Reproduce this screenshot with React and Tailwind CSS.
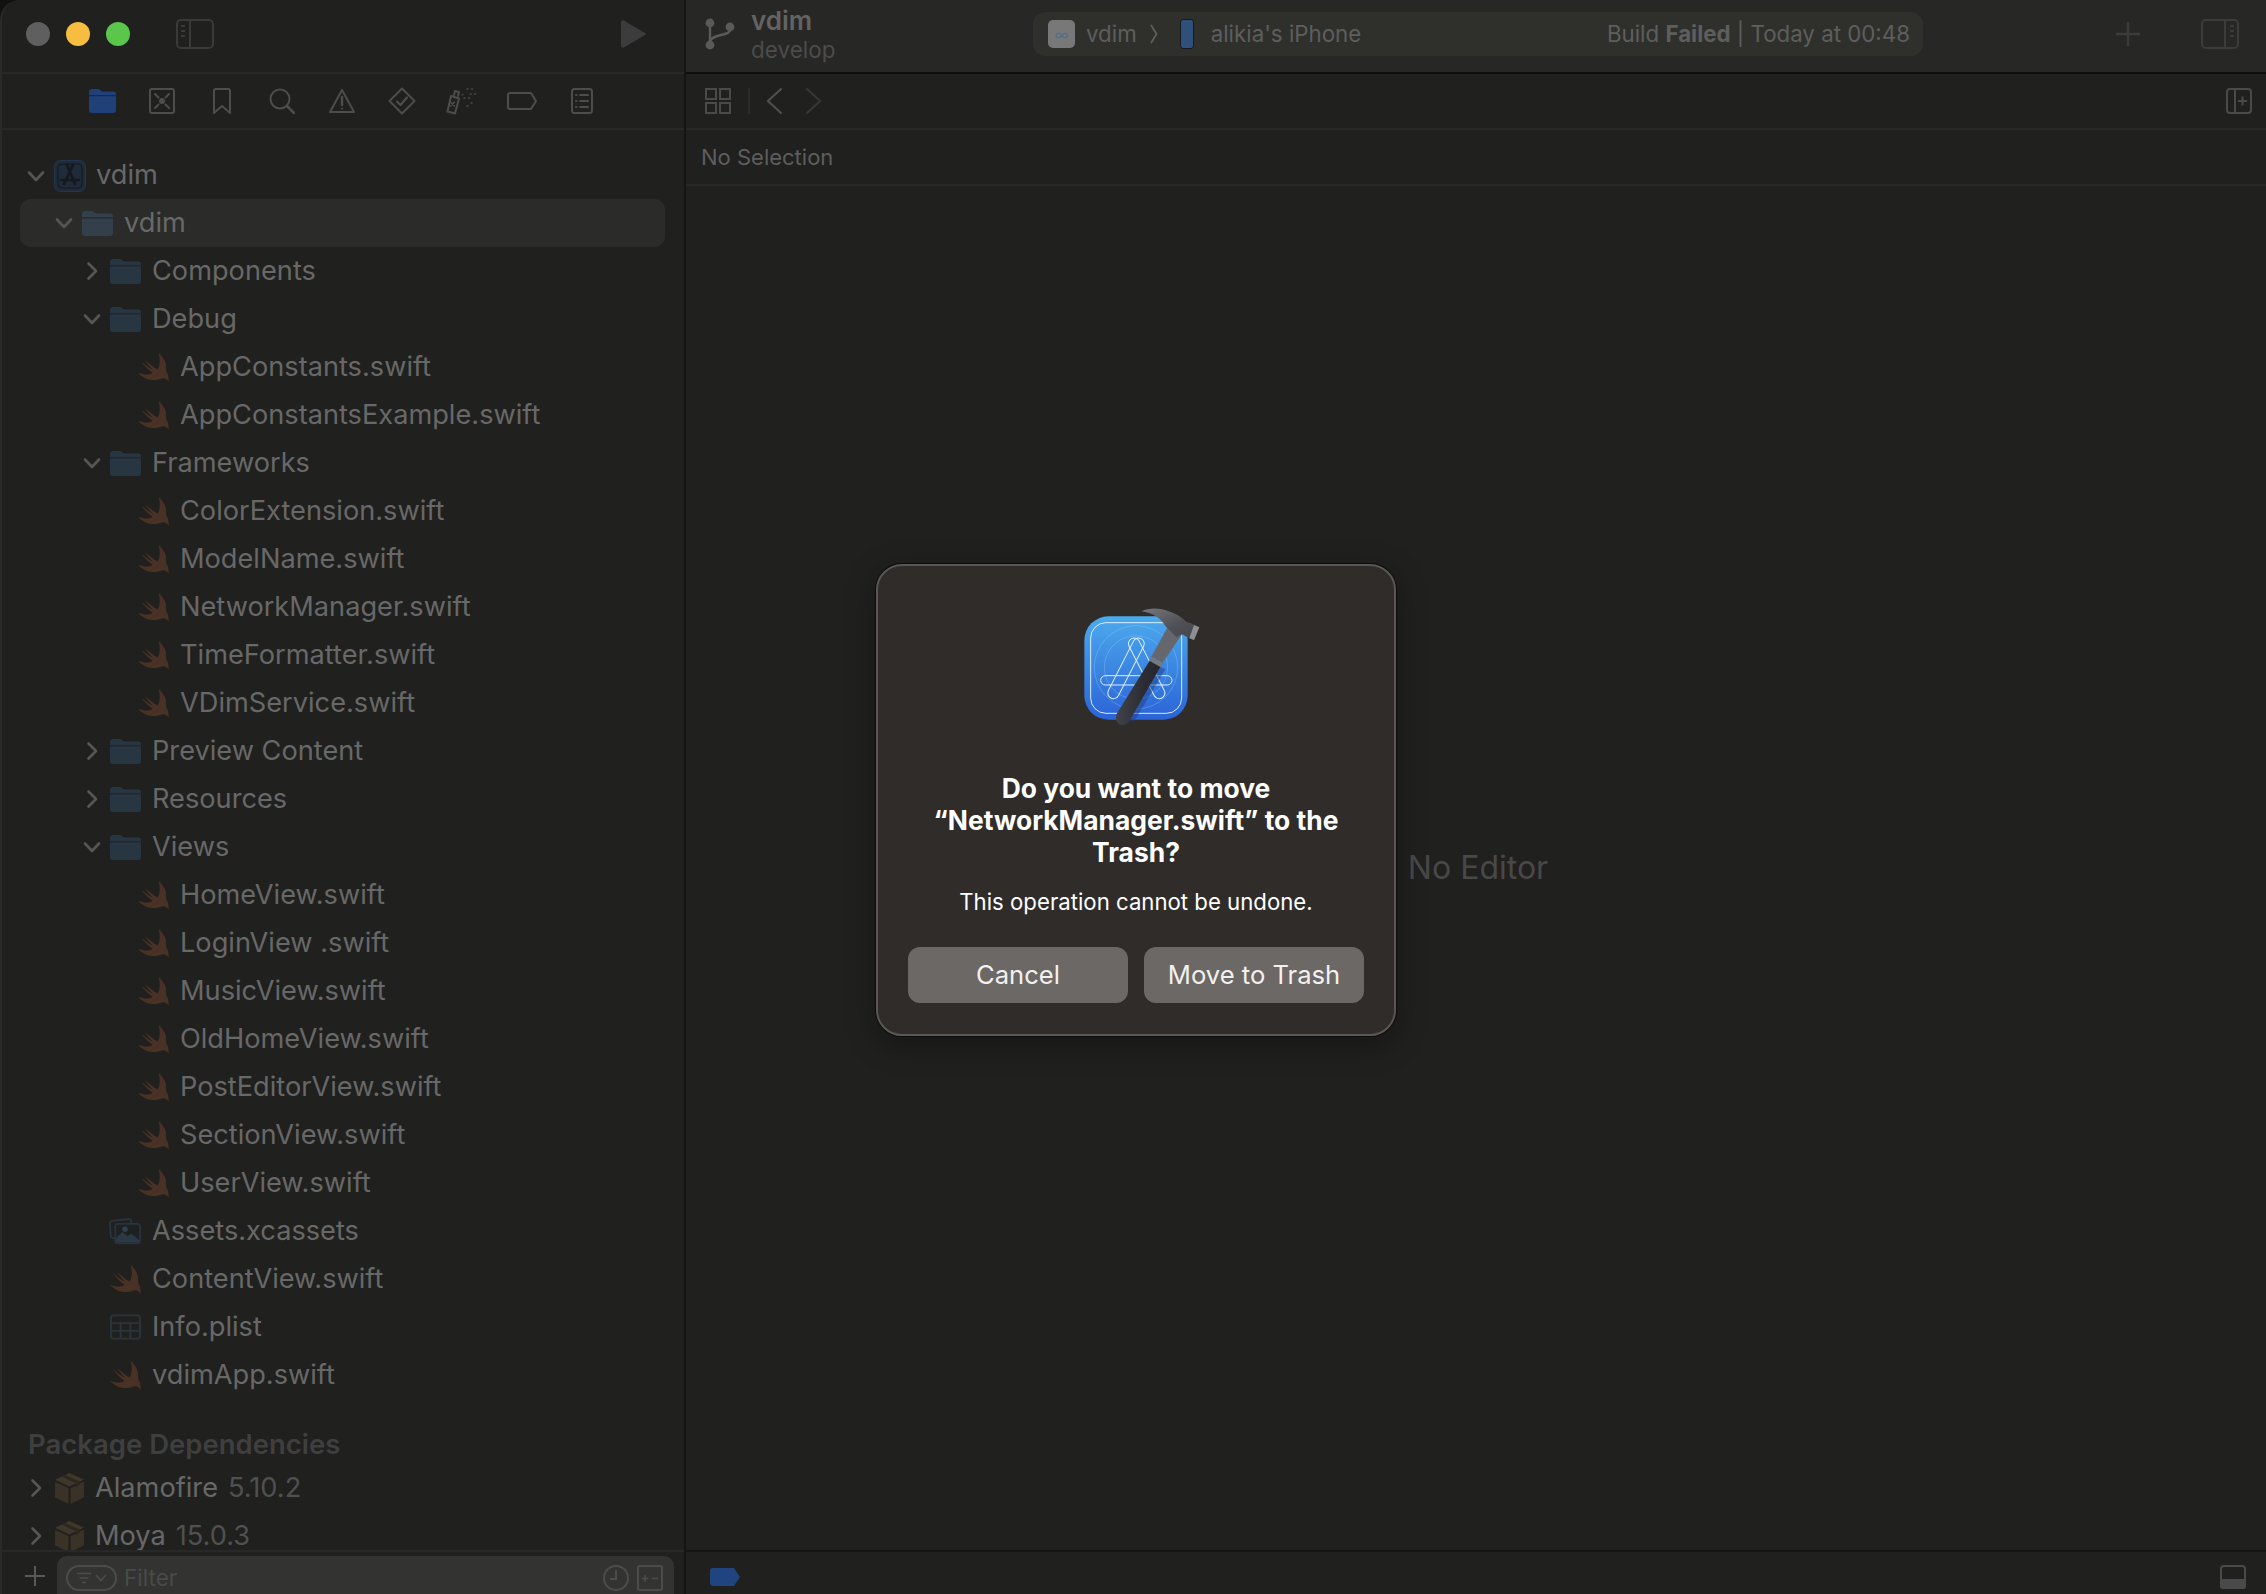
const tree = [
  { l: 1, t: "vdim", i: "folder", c: "down", sel: true },
  { l: 2, t: "Components", i: "folder", c: "right" },
  { l: 2, t: "Debug", i: "folder", c: "down" },
  { l: 3, t: "AppConstants.swift", i: "swift" },
  { l: 3, t: "AppConstantsExample.swift", i: "swift" },
  { l: 2, t: "Frameworks", i: "folder", c: "down" },
  { l: 3, t: "ColorExtension.swift", i: "swift" },
  { l: 3, t: "ModelName.swift", i: "swift" },
  { l: 3, t: "NetworkManager.swift", i: "swift" },
  { l: 3, t: "TimeFormatter.swift", i: "swift" },
  { l: 3, t: "VDimService.swift", i: "swift" },
  { l: 2, t: "Preview Content", i: "folder", c: "right" },
  { l: 2, t: "Resources", i: "folder", c: "right" },
  { l: 2, t: "Views", i: "folder", c: "down" },
  { l: 3, t: "HomeView.swift", i: "swift" },
  { l: 3, t: "LoginView .swift", i: "swift" },
  { l: 3, t: "MusicView.swift", i: "swift" },
  { l: 3, t: "OldHomeView.swift", i: "swift" },
  { l: 3, t: "PostEditorView.swift", i: "swift" },
  { l: 3, t: "SectionView.swift", i: "swift" },
  { l: 3, t: "UserView.swift", i: "swift" },
  { l: 2, t: "Assets.xcassets", i: "assets" },
  { l: 2, t: "ContentView.swift", i: "swift" },
  { l: 2, t: "Info.plist", i: "plist" },
  { l: 2, t: "vdimApp.swift", i: "swift" },
];

const indent = { 0: "pl-[4px]", 1: "pl-[32px]", 2: "pl-[60px]", 3: "pl-[88px]" };

function Chevron({ dir }) {
  return (
    <svg viewBox="0 0 24 24" className="w-[24px] h-[24px]" fill="none" stroke="#565656" strokeWidth="2.6" strokeLinecap="round" strokeLinejoin="round">
      {dir === "down" ? <path d="M5 8.5l7 7.5 7-7.5" /> : <path d="M8.5 4.5l7.5 7.5-7.5 7.5" />}
    </svg>
  );
}

function FolderIcon({ sel }) {
  const fill = sel ? "#333f4a" : "#283641";
  return (
    <svg viewBox="0 0 31 26" className="w-[31px] h-[26px]">
      <path d="M0 4a3 3 0 0 1 3-3h7c2 0 2.5 2.5 4.5 2.5H28a3 3 0 0 1 3 3V23a3 3 0 0 1-3 3H3a3 3 0 0 1-3-3z" fill={fill} />
      <rect x="0" y="7.2" width="31" height="1.2" fill="#1f2022" opacity="0.75" />
    </svg>
  );
}

function SwiftIcon() {
  return (
    <svg viewBox="1 1.5 20.4 20.4" className="w-[31px] h-[29px]" preserveAspectRatio="none">
      <path d="M14.5 1.5C18.5 5 20.2 9.6 19.3 13.7C20.7 16 21.4 19 21.2 21.8C20 19.7 18.3 18.9 16.7 19.4C13.5 20.9 9.5 21 6 19.4C3.9 18.4 2.3 16.9 1 15.2C3.4 16.6 7.4 17.2 10.6 15.5C7.6 13.2 4.9 10.2 3.1 7.5C5.6 9.9 8.4 12 11 13.5C8.9 11.3 7.2 9 5.9 6.6C8.4 9 11.2 11.6 14.1 13.2C15.6 9.6 15.8 5.5 14.5 1.5Z" fill="#4a3125" />
    </svg>
  );
}

function AssetsIcon() {
  return (
    <svg viewBox="0 0 36 30" className="w-[36px] h-[30px] -ml-[1px]">
      <path d="M8 23H5a3 3 0 0 1-3-2.6L1 7a3 3 0 0 1 2.6-3.3L22 1.5A3 3 0 0 1 25 4l.3 2" fill="none" stroke="#27343e" strokeWidth="2" />
      <rect x="7" y="7" width="28" height="22" rx="3" fill="#1f2022" stroke="#27343e" strokeWidth="2" />
      <path d="M8 28v-5l7-7 6 5 4-3 9 7v3z" fill="#2a3945" />
      <circle cx="18" cy="13" r="3" fill="#2f4150" />
    </svg>
  );
}

function PlistIcon() {
  return (
    <svg viewBox="0 0 32 26" className="w-[32px] h-[26px]" fill="none" stroke="#2b343b" strokeWidth="2">
      <rect x="1" y="1" width="30" height="24" rx="3" />
      <path d="M1 9h30M1 17h30M11 9v16M21 9v16" />
    </svg>
  );
}

function ProjectIcon() {
  return (
    <svg viewBox="0 0 32 32" className="w-[32px] h-[32px]">
      <rect x="0.5" y="0.5" width="31" height="31" rx="6" fill="#1f2b39" stroke="#24364a" />
      <rect x="4" y="4" width="24" height="24" rx="4" fill="none" stroke="#15191e" strokeWidth="1.2" />
      <path d="M13 5l8 19M19 5L10 24M7 20h18" stroke="#15181c" strokeWidth="2.6" strokeLinecap="round" />
    </svg>
  );
}

function PackageIcon() {
  return (
    <svg viewBox="0 0 28 30" className="w-[29px] h-[31px]">
      <path d="M14 0l14 6.5L14 13 0 6.5z" fill="#3f3729" />
      <path d="M0 8.5l13 6V30L0 23.5z" fill="#3a3226" />
      <path d="M28 8.5l-13 6V30l13-6.5z" fill="#3a3226" />
      <path d="M6 3.2l14 6.6v4l3.5-1.6v-4L9.5 1.6z" fill="#2d271f" />
    </svg>
  );
}

function Row({ item }) {
  const Icon = { folder: <FolderIcon sel={item.sel} />, swift: <SwiftIcon />, assets: <AssetsIcon />, plist: <PlistIcon /> }[item.i];
  return (
    <div className={`h-[48px] ml-[18px] mr-[19px] flex items-center rounded-[10px] ${indent[item.l]} ${item.sel ? "bg-[#2b2b2a]" : ""}`}>
      <div className="w-[24px] flex justify-center shrink-0">{item.c ? <Chevron dir={item.c} /> : null}</div>
      <div className="w-[31px] ml-[6px] flex justify-center items-center shrink-0">{Icon}</div>
      <span className="ml-[11px] text-[27.2px] leading-[48px] text-[#686868] whitespace-nowrap">{item.t}</span>
    </div>
  );
}

function PackageRow({ name, ver, size }) {
  return (
    <div className={`ml-[18px] mr-[19px] pl-[4px] flex items-center shrink-0 ${size}`}>
      <div className="w-[24px] flex justify-center"><Chevron dir="right" /></div>
      <div className="w-[29px] ml-[7px]"><PackageIcon /></div>
      <span className="ml-[11px] text-[27.2px] leading-[28px] text-[#686868]">{name}</span>
      <span className="ml-[10px] text-[27.2px] leading-[28px] text-[#505050]">{ver}</span>
    </div>
  );
}

const st = { fill: "none", stroke: "#4d4d4d", strokeWidth: 2, strokeLinecap: "round", strokeLinejoin: "round" };

function Navigators() {
  return (
    <div className="h-[56px] shrink-0 border-b-2 border-[#282828] flex items-center justify-center">
      <div className="w-[540px] grid grid-cols-9 justify-items-center items-center -translate-x-[1px]">
        <svg viewBox="0 0 27 24" className="w-[27px] h-[24px]">
          <path d="M0 3a3 3 0 0 1 3-3h6c2 0 3 2.6 5 2.6H24a3 3 0 0 1 3 3V21a3 3 0 0 1-3 3H3a3 3 0 0 1-3-3z" fill="#20407a" />
          <rect y="6" width="27" height="1.2" fill="#182a4c" />
        </svg>
        <svg viewBox="0 0 26 26" className="w-[26px] h-[26px]" {...st}>
          <rect x="1" y="1" width="24" height="24" rx="2" />
          <circle cx="13" cy="13" r="3" fill="#4d4d4d" stroke="none" />
          <path d="M6 6l3.5 3.5M20 6l-3.5 3.5M6 20l3.5-3.5M20 20l-3.5-3.5" />
        </svg>
        <svg viewBox="0 0 18 26" className="w-[18px] h-[26px]" {...st}>
          <path d="M1 3a2 2 0 0 1 2-2h12a2 2 0 0 1 2 2v22l-8-7-8 7z" />
        </svg>
        <svg viewBox="0 0 26 26" className="w-[26px] h-[26px]" {...st}>
          <circle cx="11" cy="11" r="9.5" /><path d="M18 18l7 7" strokeWidth="2.6" />
        </svg>
        <svg viewBox="0 0 26 24" className="w-[26px] h-[24px]" {...st}>
          <path d="M13 1L25 23H1z" /><path d="M13 8v8" strokeWidth="2.4" /><circle cx="13" cy="19.5" r="1" fill="#4d4d4d" stroke="none" />
        </svg>
        <svg viewBox="0 0 28 28" className="w-[28px] h-[28px]" {...st}>
          <path d="M14 1.5L26.5 14 14 26.5 1.5 14z" /><path d="M9 14.5l3.5 3.5L19 10.5" strokeWidth="2.2" />
        </svg>
        <svg viewBox="0 0 32 28" className="w-[32px] h-[28px]" {...st}>
          <path d="M5 9l8 2.5-4 15L1.5 24.5z" /><path d="M8 8l1-4 4 1-1 4" />
          <path d="M4.5 15l4 4M8.5 15l-4 4" strokeWidth="1.6" />
          <g stroke="#4a4a4a" strokeWidth="1.5" strokeDasharray="1 3.5">
            <path d="M16 8l3-2M18 11h7M21 2h6M24 7h6M25 16h4M21 19h3" />
          </g>
        </svg>
        <svg viewBox="0 0 30 18" className="w-[30px] h-[18px]" {...st}>
          <path d="M3 1h21l5 8-5 8H3a2 2 0 0 1-2-2V3a2 2 0 0 1 2-2z" />
        </svg>
        <svg viewBox="0 0 22 26" className="w-[22px] h-[26px]" {...st}>
          <rect x="1" y="1" width="20" height="24" rx="2.5" />
          <path d="M5 7h.5M9 7h8M5 13h.5M9 13h8M5 19h.5M9 19h8" />
        </svg>
      </div>
    </div>
  );
}

function Footer() {
  return (
    <div className="h-[44px] shrink-0 border-t-2 border-[#282828] flex items-start overflow-hidden pl-[22px] pr-[10px] pt-[4px]">
      <svg viewBox="0 0 22 22" className="w-[22px] h-[22px] mt-[9px] shrink-0" stroke="#5a5a5a" strokeWidth="2" fill="none"><path d="M11 1v20M1 11h20" /></svg>
      <div className="ml-[11px] flex-1 h-[50px] rounded-[10px] bg-[#333332] flex items-start pl-[9px] pr-[11px] pt-[9px] text-[#4a4a4a]">
        <div className="w-[51px] h-[26px] rounded-full border-2 border-[#4c4c4c] flex items-center justify-center gap-[3px]">
          <svg viewBox="0 0 16 12" className="w-[16px] h-[12px]" stroke="#4c4c4c" strokeWidth="1.6" fill="none"><path d="M1 1.5h14M3.5 6h9M6 10.5h4" /></svg>
          <svg viewBox="0 0 12 8" className="w-[12px] h-[8px]" stroke="#4c4c4c" strokeWidth="1.8" fill="none"><path d="M1 1l5 5.5L11 1" /></svg>
        </div>
        <span className="ml-[7px] text-[22.5px] leading-[26px] flex-1">Filter</span>
        <svg viewBox="0 0 26 26" className="w-[26px] h-[26px]" stroke="#4c4c4c" strokeWidth="2" fill="none"><circle cx="13" cy="13" r="12" /><path d="M13 5v9H7" /></svg>
        <div className="ml-[8px] w-[26px] h-[26px] rounded-[3px] border-2 border-[#4c4c4c] flex items-center justify-center">
          <svg viewBox="0 0 20 12" className="w-[18px] h-[11px]" stroke="#4c4c4c" strokeWidth="1.8" fill="none"><path d="M1 6h7M4.5 2.5v7M12 6h7" /></svg>
        </div>
      </div>
    </div>
  );
}

function Sidebar() {
  return (
    <aside className="w-[686px] shrink-0 h-full flex flex-col border-r-2 border-[#151515] rounded-tl-[20px] bg-[#20201f] border-l-2 border-l-[#2a2a2a]">
      <div className="h-[74px] shrink-0 border-b-2 border-[#282828] flex items-center pl-[24px] pr-[38px] pb-[4px]">
        <div className="flex gap-[16px]">
          <div className="w-[24px] h-[24px] rounded-full bg-[#5f5f5f]" />
          <div className="w-[24px] h-[24px] rounded-full bg-[#f6bd41]" />
          <div className="w-[24px] h-[24px] rounded-full bg-[#5ac64b]" />
        </div>
        <svg viewBox="0 0 38 30" className="ml-[46px] w-[38px] h-[30px]" fill="none" stroke="#3a3a3a" strokeWidth="2">
          <rect x="1" y="1" width="36" height="28" rx="4" />
          <path d="M14 1v28M5 7h4M5 12h4M5 17h4" />
        </svg>
        <svg viewBox="0 0 26 28" className="ml-auto w-[26px] h-[28px]"><path d="M1 2.5C1 .6 2.6-.3 4.2.7L25 13a1.2 1.2 0 0 1 0 2L4.2 27.3C2.6 28.3 1 27.4 1 25.5z" fill="#3c3c3c" /></svg>
      </div>
      <Navigators />
      <div className="flex-1 min-h-0 pt-[22px]">
        <div className="h-[47px] ml-[18px] pl-[4px] flex items-center">
          <div className="w-[24px] flex justify-center"><Chevron dir="down" /></div>
          <div className="ml-[6px] w-[32px]"><ProjectIcon /></div>
          <span className="ml-[10px] text-[27.2px] text-[#686868]">vdim</span>
        </div>
        {tree.map((item, i) => <Row key={i} item={item} />)}
        <div className="mt-[27px] mb-[2px] h-[36px] ml-[26px] text-[27.5px] leading-[36px] font-semibold text-[#3f3f3f]">Package Dependencies</div>
        <PackageRow name="Alamofire" ver="5.10.2" size="h-[48px]" />
        <PackageRow name="Moya" ver="15.0.3" size="h-[38px] pt-[10px]" />
      </div>
      <Footer />
    </aside>
  );
}

function Toolbar() {
  return (
    <div className="h-[74px] shrink-0 bg-[#272725] border-b-2 border-[#0e0e0e] flex items-center pl-[19px] pr-[27px] pb-[4px]">
      <svg viewBox="0 0 30 32" className="w-[30px] h-[32px] shrink-0" fill="none" stroke="#5a5a5a" strokeWidth="2.4">
        <circle cx="5" cy="5" r="3.2" fill="#5a5a5a" /><circle cx="5" cy="27" r="3.2" fill="#5a5a5a" /><circle cx="25" cy="9" r="3.2" fill="#5a5a5a" />
        <path d="M5 8v16M25 12c0 6-20 4-20 12" />
      </svg>
      <div className="ml-[16px] w-[160px] flex flex-col shrink-0">
        <span className="text-[26px] leading-[30px] font-semibold text-[#636363]">vdim</span>
        <span className="text-[22.5px] leading-[27px] text-[#4c4c4c]">develop</span>
      </div>
      <div className="ml-[122px] w-[890px] h-[44px] rounded-[12px] bg-[#2f302c] flex items-center pl-[15px] pr-[13px] text-[22.3px] text-[#5e5e5e] whitespace-nowrap">
        <div className="w-[27px] h-[28px] rounded-[5px] bg-[#787878] flex items-center justify-center text-[15px] leading-none text-[#4f6f88]">∞</div>
        <span className="ml-[11px]">vdim</span>
        <svg viewBox="0 0 8 20" className="ml-[13px] w-[8px] h-[20px]" fill="none" stroke="#5e5e5e" strokeWidth="1.8"><path d="M1 1l5.5 9L1 19" /></svg>
        <div className="ml-[22px] w-[14px] h-[30px] rounded-[3px] bg-[#2f5078] border border-[#151a20]" />
        <span className="ml-[17px]">alikia's iPhone</span>
        <span className="ml-auto">Build <b className="font-bold">Failed</b> | Today at 00:48</span>
      </div>
      <svg viewBox="0 0 24 24" className="ml-auto w-[24px] h-[24px]" stroke="#3c3c3c" strokeWidth="2.4" fill="none"><path d="M12 0v24M0 12h24" /></svg>
      <svg viewBox="0 0 38 30" className="ml-[61px] w-[38px] h-[30px]" fill="none" stroke="#3c3c3c" strokeWidth="2">
        <rect x="1" y="1" width="36" height="28" rx="4" />
        <path d="M24 1v28M29 7h4M29 12h4M29 17h4" />
      </svg>
    </div>
  );
}

function Editor() {
  return (
    <main className="flex-1 min-w-0 h-full flex flex-col bg-[#20201f]">
      <Toolbar />
      <div className="h-[56px] shrink-0 border-b-2 border-[#282828] flex items-center pl-[19px] pr-[14px]">
        <svg viewBox="0 0 26 26" className="w-[26px] h-[26px]" fill="none" stroke="#4a4a4a" strokeWidth="2">
          <rect x="1" y="1" width="10" height="10" /><rect x="15" y="1" width="10" height="10" /><rect x="1" y="15" width="10" height="10" /><rect x="15" y="15" width="10" height="10" />
        </svg>
        <div className="ml-[17px] w-[2px] h-[26px] bg-[#2c2c2c]" />
        <svg viewBox="0 0 18 28" className="ml-[15px] w-[18px] h-[28px]" fill="none" stroke="#4f4f4f" strokeWidth="2.2" strokeLinecap="round"><path d="M16 2L3 14l13 12" /></svg>
        <svg viewBox="0 0 18 28" className="ml-[22px] w-[18px] h-[28px]" fill="none" stroke="#363636" strokeWidth="2.2" strokeLinecap="round"><path d="M2 2l13 12L2 26" /></svg>
        <svg viewBox="0 0 26 26" className="ml-auto w-[26px] h-[26px]" fill="none" stroke="#4a4a4a" strokeWidth="2">
          <rect x="1" y="1" width="24" height="24" rx="3" /><path d="M9 1v24M12 13h9M16.5 8.5v9" />
        </svg>
      </div>
      <div className="h-[56px] shrink-0 border-b-2 border-[#282828] flex items-center pl-[15px] text-[22px] text-[#5e5e5e]">No Selection</div>
      <div className="flex-1 flex items-center justify-center pl-[4px] text-[32px] text-[#484848]">No Editor</div>
      <div className="h-[44px] shrink-0 border-t-2 border-[#151515] flex items-center pl-[24px] pr-[20px]">
        <svg viewBox="0 0 30 18" className="w-[30px] h-[18px] mt-[8px]"><path d="M3 0h21l6 9-6 9H3a3 3 0 0 1-3-3V3a3 3 0 0 1 3-3z" fill="#1f4480" /></svg>
        <svg viewBox="0 0 26 24" className="ml-auto w-[26px] h-[24px] mt-[8px]" fill="none" stroke="#4a4a4a" strokeWidth="2">
          <rect x="1" y="1" width="24" height="22" rx="3" /><path d="M1 15h24" /><path d="M1 15h24v6a2 2 0 0 1-2 2H3a2 2 0 0 1-2-2z" fill="#4a4a4a" />
        </svg>
      </div>
    </main>
  );
}

function XcodeIcon() {
  return (
    <svg viewBox="3 0 570 450" className="w-[190px] h-[150px]">
      <defs>
        <linearGradient id="b" x1="0" y1="0" x2="0" y2="1"><stop offset="0" stopColor="#4caaec" /><stop offset="1" stopColor="#2b63d8" /></linearGradient>
        <linearGradient id="h" x1="0" y1="0" x2="1" y2="1"><stop offset="0" stopColor="#77787d" /><stop offset="0.55" stopColor="#505156" /><stop offset="1" stopColor="#44454a" /></linearGradient>
        <linearGradient id="g" x1="0" y1="0" x2="1" y2="0"><stop offset="0" stopColor="#42434a" /><stop offset="0.6" stopColor="#2c2d33" /><stop offset="1" stopColor="#25252b" /></linearGradient>
      </defs>
      <rect x="133" y="79" width="310" height="310" rx="72" fill="url(#b)" />
      <rect x="152" y="98" width="273" height="272" rx="46" fill="none" stroke="#d7ecff" strokeWidth="3" />
      <g fill="none" stroke="#a9d3f6" strokeOpacity="0.45" strokeWidth="2">
        <circle cx="288" cy="232" r="125" /><circle cx="288" cy="232" r="95" />
      </g>
      <g fill="none" stroke="#dcefff" strokeWidth="3">
        <rect x="182" y="257" width="214" height="28" rx="14" />
        <rect x="-17" y="-100" width="34" height="200" rx="17" transform="translate(258 235) rotate(27)" />
        <rect x="-17" y="-100" width="34" height="200" rx="17" transform="translate(320 235) rotate(-27)" />
      </g>
      <path d="M344 222L376 238L284 392L250 398Z" fill="#1d3f86" opacity="0.5" />
      <path d="M334 200L388 102L428 130L368 218Z" fill="#66676c" />
      <path d="M334 204L366 222L268 394C258 410 236 408 229 392C226 382 228 375 232 368Z" fill="url(#g)" />
      <path d="M334 200L368 219L362 232L328 212Z" fill="#77787d" />
      <path d="M305 64C340 46 400 58 440 96L452 100L478 112L462 150L440 140L425 132L410 142L376 108C362 84 335 68 305 64Z" fill="url(#h)" />
      <path d="M462 105L478 112L462 150L448 145Z" fill="#8d8f94" />
    </svg>
  );
}

function Dialog() {
  return (
    <div className="absolute left-[876px] top-[564px] w-[520px] h-[472px] rounded-[26px] bg-[#2f2c2a] border-2 border-[#5a5755] shadow-[0_0_0_1px_#0c0c0c,0_8px_30px_rgba(0,0,0,0.35)] flex flex-col items-center pt-[24px] px-[30px]">
      <XcodeIcon />
      <div className="mt-[32px] text-[26.4px] leading-[32px] font-bold text-white text-center w-[430px]">
        Do you want to move “NetworkManager.swift” to the Trash?
      </div>
      <div className="mt-[18px] text-[22.2px] leading-[32px] text-white">This operation cannot be undone.</div>
      <div className="mt-[29px] w-full flex gap-[16px]">
        <div className="flex-1 h-[56px] rounded-[12px] bg-[#6c6865] flex items-center justify-center text-[25.6px] text-[#f3f1ef]">Cancel</div>
        <div className="flex-1 h-[56px] rounded-[12px] bg-[#6c6865] flex items-center justify-center text-[25.6px] text-[#f3f1ef]">Move to Trash</div>
      </div>
    </div>
  );
}

export default function App() {
  return (
    <div className="relative w-[2266px] h-[1594px] overflow-hidden flex bg-[#111111] [font-family:Inter,sans-serif]">
      <Sidebar />
      <Editor />
      <Dialog />
    </div>
  );
}
